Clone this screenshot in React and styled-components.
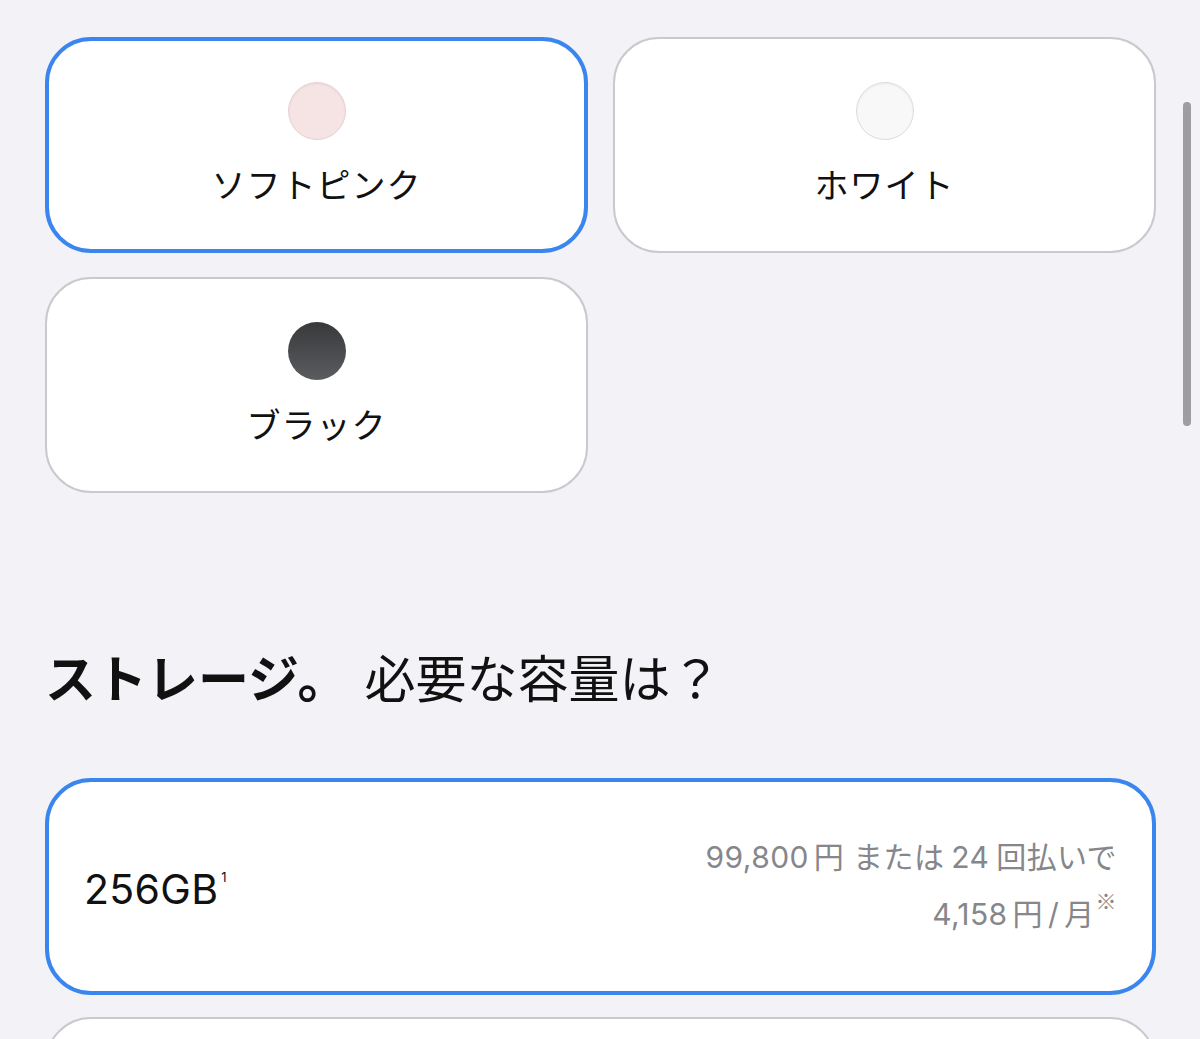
import React from "react";
import styled, { createGlobalStyle, css } from "styled-components";

const GlobalStyle = createGlobalStyle`
  html, body {
    margin: 0;
    padding: 0;
    background: #f2f2f7;
  }
  body {
    font-family: Inter, "Noto Sans CJK JP", sans-serif;
    color: #1d1d1f;
    overflow: hidden;
  }
`;

const Page = styled.div`
  width: 1200px;
  height: 1039px;
  box-sizing: border-box;
  padding: 37px 44px 0 45px;
  background: #f2f2f7;
  overflow: hidden;
`;

const ColorGrid = styled.div`
  display: grid;
  grid-template-columns: 1fr 1fr;
  column-gap: 25px;
  row-gap: 24px;
`;

const cardBorder = css`
  box-sizing: border-box;
  background: #ffffff;
  border-radius: 46px;
  border: ${(p) => (p.$selected ? "4px solid #3b86ee" : "2px solid #cacace")};
`;

const OptionCard = styled.div`
  ${cardBorder};
  height: 216px;
  display: flex;
  flex-direction: column;
  align-items: center;
  padding-top: ${(p) => (p.$selected ? 41 : 43)}px;
`;

const Swatch = styled.div`
  width: 58px;
  height: 58px;
  border-radius: 50%;
  box-sizing: border-box;
  background: ${(p) => p.$fill};
  border: ${(p) => (p.$edge ? `1px solid ${p.$edge}` : "none")};
  box-shadow: ${(p) => (p.$edge ? "inset 0 1px 2px rgba(0,0,0,0.06)" : "none")};
`;

const ColorLabel = styled.div`
  margin-top: 22px;
  font-family: "Noto Sans CJK JP", sans-serif;
  font-size: 34px;
  line-height: 44px;
  letter-spacing: 1px;
  color: #111;
`;

const Heading = styled.h2`
  margin: 152px 0 0 0;
  font-family: "Noto Sans CJK JP", sans-serif;
  font-size: 51px;
  line-height: 62px;
  font-weight: 400;
  color: #111;
  display: flex;
`;

const HeadStrong = styled.span`
  font-weight: 700;
`;

const HeadSub = styled.span`
  margin-left: 16px;
`;

const StorageList = styled.div`
  margin-top: 71px;
  display: flex;
  flex-direction: column;
  gap: 22px;
`;

const StorageCard = styled.div`
  ${cardBorder};
  height: 217px;
  display: flex;
  align-items: center;
  justify-content: space-between;
  padding: 0 ${(p) => (p.$selected ? 35 : 37)}px 0 ${(p) => (p.$selected ? 35 : 37)}px;
`;

const Capacity = styled.div`
  font-family: Inter, "Noto Sans CJK JP", sans-serif;
  font-size: 41px;
  line-height: 48px;
  letter-spacing: 0.3px;
  color: #111;
  margin-top: 4px;
`;

const Sup = styled.sup`
  font-size: 13px;
  vertical-align: top;
  position: relative;
  top: -12px;
  margin-left: 3px;
`;

const Price = styled.div`
  text-align: right;
  font-family: Inter, "Noto Sans CJK JP", sans-serif;
  font-size: 30px;
  line-height: 57px;
  letter-spacing: 0.4px;
  color: #86868b;
  margin-top: -2px;
`;

const Gap = styled.span`
  display: inline-block;
  width: ${(p) => p.$w}px;
`;

const PriceSup = styled.sup`
  font-family: "Noto Sans CJK JP", sans-serif;
  font-size: 21px;
  vertical-align: top;
  position: relative;
  top: -14px;
  margin-left: 1px;
`;

const ScrollThumb = styled.div`
  position: fixed;
  top: 102px;
  left: 1183px;
  width: 8px;
  height: 324px;
  border-radius: 4px;
  background: #9d9da2;
`;

const colors = [
  { name: "ソフトピンク", fill: "#f6e3e4", edge: "#e6d2d4", selected: true },
  { name: "ホワイト", fill: "#f8f8f8", edge: "#dcdcdc" },
  { name: "ブラック", fill: "linear-gradient(180deg, #37393b 0%, #5b5c5f 100%)" },
];

export default function App() {
  return (
    <>
      <GlobalStyle />
      <Page>
        <ColorGrid>
          {colors.map((c) => (
            <OptionCard key={c.name} $selected={c.selected}>
              <Swatch $fill={c.fill} $edge={c.edge} />
              <ColorLabel>{c.name}</ColorLabel>
            </OptionCard>
          ))}
        </ColorGrid>
        <Heading>
          <HeadStrong>ストレージ。</HeadStrong>
          <HeadSub>必要な容量は？</HeadSub>
        </Heading>
        <StorageList>
          <StorageCard $selected>
            <Capacity>
              256GB<Sup>1</Sup>
            </Capacity>
            <Price>
              <div>
                99,800<Gap $w={5} />円 または<Gap $w={7} />24<Gap $w={7} />回払いで
              </div>
              <div>
                4,158<Gap $w={5} />円<Gap $w={5} />/<Gap $w={5} />月<PriceSup>※</PriceSup>
              </div>
            </Price>
          </StorageCard>
          <StorageCard />
        </StorageList>
      </Page>
      <ScrollThumb />
    </>
  );
}
